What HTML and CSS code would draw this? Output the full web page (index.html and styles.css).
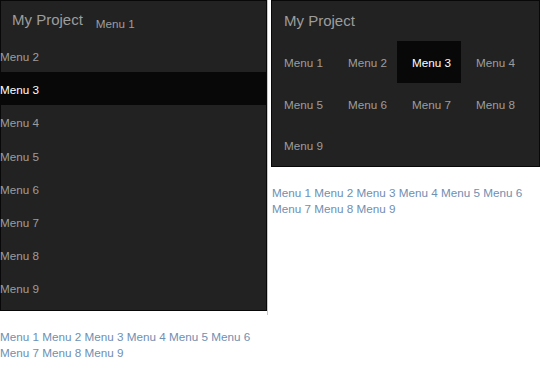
FILE: index.html
```html
<!DOCTYPE html>
<html>
<head>
<meta charset="utf-8">
<link rel="stylesheet" href="styles.css">
</head>
<body>
<div class="page">
  <div class="col col-left">
    <div class="frame">
      <nav class="navbar navbar-collapsed">
        <div class="header">
          <span class="brand">My Project</span>
          <a class="head-link">Menu 1</a>
        </div>
        <ul class="rows">
          <li><a>Menu 2</a></li>
          <li class="active"><a>Menu 3</a></li>
          <li><a>Menu 4</a></li>
          <li><a>Menu 5</a></li>
          <li><a>Menu 6</a></li>
          <li><a>Menu 7</a></li>
          <li><a>Menu 8</a></li>
          <li><a>Menu 9</a></li>
        </ul>
      </nav>
    </div>
    <div class="links">
      <a>Menu 1</a> <a>Menu 2</a> <a>Menu 3</a> <a>Menu 4</a> <a>Menu 5</a> <a>Menu 6</a> <a>Menu 7</a> <a>Menu 8</a> <a>Menu 9</a>
    </div>
  </div>
  <div class="col col-right">
    <nav class="navbar navbar-wide">
      <div class="header">
        <span class="brand">My Project</span>
      </div>
      <ul class="grid">
        <li><a>Menu 1</a></li>
        <li><a>Menu 2</a></li>
        <li class="active"><a>Menu 3</a></li>
        <li><a>Menu 4</a></li>
        <li><a>Menu 5</a></li>
        <li><a>Menu 6</a></li>
        <li><a>Menu 7</a></li>
        <li><a>Menu 8</a></li>
        <li><a>Menu 9</a></li>
      </ul>
    </nav>
    <div class="links links-right">
      <a>Menu 1</a> <a>Menu 2</a> <a>Menu 3</a> <a>Menu 4</a> <a>Menu 5</a> <a>Menu 6</a> <a>Menu 7</a> <a>Menu 8</a> <a>Menu 9</a>
    </div>
  </div>
</div>
</body>
</html>
```
FILE: styles.css
```css
html, body {
  margin: 0;
  padding: 0;
  background: #fff;
}

body {
  font-family: "Liberation Sans", Arial, sans-serif;
  font-size: 11.7px;
}

.page {
  display: flex;
  align-items: flex-start;
  gap: 3px;
}

ul {
  list-style: none;
  margin: 0;
  padding: 0;
}

a {
  text-decoration: none;
}

.col-left {
  width: 268px;
}

.col-right {
  width: 269px;
}

.frame {
  border-right: 1px solid #c9c9c9;
  padding-bottom: 4px;
}

.navbar {
  background: #222222;
  border: 1px solid #080808;
}

.brand {
  font-size: 15px;
  line-height: 18px;
  color: #9d9d9d;
  white-space: nowrap;
}

/* left collapsed navbar */
.navbar-collapsed .header {
  display: flex;
  align-items: flex-start;
  height: 38px;
}

.navbar-collapsed .brand {
  padding: 10px 0 0 11px;
}

.head-link {
  padding: 15px 0 0 13px;
  line-height: 16px;
  color: #9d9d9d;
}

.rows {
  margin: 0 -1px;
  padding-bottom: 5.4px;
}

.rows li a {
  display: block;
  height: 16px;
  line-height: 16px;
  padding: 10px 0 7.2px 0;
  color: #9d9d9d;
}

.rows li.active a,
.grid li.active a {
  background: #080808;
  color: #ffffff;
}

/* right wide navbar */
.navbar-wide .header {
  height: 40px;
}

.navbar-wide .brand {
  display: block;
  padding: 11px 0 0 12px;
}

.grid {
  display: flex;
  flex-wrap: wrap;
  margin-left: -3px;
}

.grid li {
  width: 64px;
}

.grid li a {
  display: block;
  height: 16px;
  line-height: 16px;
  padding: 14px 0 11.5px 15px;
  color: #9d9d9d;
  white-space: nowrap;
}

/* plain links */
.links {
  margin-top: 14px;
  line-height: 16px;
  color: #6f8fb3;
}

.links a {
  color: #6f8fb3;
}

.links-right {
  margin-top: 18px;
  padding-left: 1px;
}
```
